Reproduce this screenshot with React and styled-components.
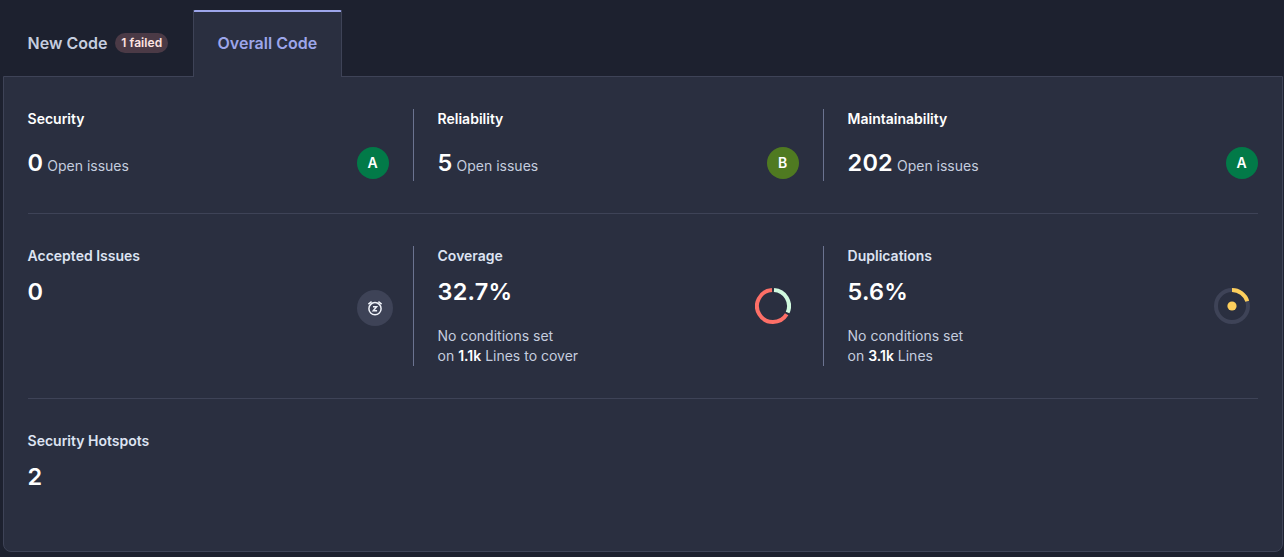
import React from 'react';
import styled, { createGlobalStyle } from 'styled-components';

const Global = createGlobalStyle`
  *, *::before, *::after { box-sizing: border-box; }
  html, body { margin: 0; height: 100%; background: #1d212f; }
  body {
    font-family: Inter, "Liberation Sans", sans-serif;
    font-size: 14px;
    line-height: 20px;
    color: #c5cddf;
    overflow: hidden;
  }
`;

const Page = styled.div`
  width: 1280px;
  height: 557px;
  margin-left: 2.55px;
  padding-top: 10px;
`;

const Tabs = styled.div`
  display: flex;
  height: 67px;
`;

const Tab = styled.button`
  display: flex;
  align-items: center;
  gap: 8px;
  width: ${(p) => (p.$active ? 149 : 190)}px;
  padding: 0 24px 3px;
  border: 1px solid ${(p) => (p.$active ? '#3e4357' : 'transparent')};
  border-bottom: 0;
  border-top: 2px solid ${(p) => (p.$active ? '#9da6eb' : 'transparent')};
  border-radius: 2px 2px 0 0;
  background: ${(p) => (p.$active ? '#2a2f40' : 'transparent')};
  color: ${(p) => (p.$active ? '#9da6eb' : '#c5cddf')};
  font: 600 16px/24px Inter, sans-serif;
  white-space: nowrap;
  z-index: 1;
`;

const FailedBadge = styled.span`
  height: 20px;
  padding: 0 6px;
  border-radius: 10px;
  background: #4b3a46;
  color: #fee4e2;
  font-size: 12px;
  line-height: 20px;
  letter-spacing: 0.08px;
`;

const Panel = styled.main`
  height: 476px;
  margin-top: -1px;
  padding: 0 24px;
  background: #2a2f40;
  border: 1px solid #3e4357;
  border-radius: 0 0 8px 8px;
`;

const Row = styled.section`
  display: flex;
  gap: 24px;
  padding: 32px 0;
  border-bottom: 1px solid ${(p) => (p.$last ? 'transparent' : '#3e4357')};
`;

const Cell = styled.div`
  flex: none;
  width: ${(p) => (p.$last ? 410 : 386)}px;
  height: ${(p) => p.$height}px;
  padding-right: ${(p) => (p.$last ? 0 : 24)}px;
  border-right: ${(p) => (p.$last ? '0' : '1px solid #6b7390')};
`;

const Title = styled.h3`
  margin: 0;
  font-size: 14px;
  line-height: 20px;
  font-weight: 600;
  color: ${(p) => (p.$bright ? '#fff' : '#dde3f2')};
`;

const RatingLine = styled.div`
  display: flex;
  justify-content: space-between;
  align-items: center;
  height: 32px;
  margin-top: 18px;
`;

const Value = styled.span`
  font-size: 23.5px;
  letter-spacing: 0.2px;
  line-height: 32px;
  font-weight: 600;
  color: #fff;
`;

const Label = styled.span`
  margin-left: 4px;
`;

const Rating = styled.span`
  width: 32px;
  height: 32px;
  border-radius: 50%;
  background: ${(p) => (p.$grade === 'A' ? '#027a48' : '#4f7a21')};
  color: #fff;
  font-weight: 600;
  line-height: 32px;
  text-align: center;
`;

const MetricBody = styled.div`
  display: flex;
  justify-content: space-between;
  margin-top: 10px;
`;

const Figure = styled.div`
  height: 36px;
  margin-top: ${(p) => p.$top}px;
  margin-right: ${(p) => p.$right}px;
  svg { display: block; }
`;

const Conditions = styled.div`
  margin-top: 18px;
  b { color: #fff; font-weight: 600; }
`;

const RING = 2 * Math.PI * 16;

function arc(from, to) {
  const point = (t) => {
    const a = t * 2 * Math.PI;
    return `${(18 + 16 * Math.sin(a)).toFixed(3)} ${(18 - 16 * Math.cos(a)).toFixed(3)}`;
  };
  return `M${point(from)}A16 16 0 ${to - from > 0.5 ? 1 : 0} 1 ${point(to)}`;
}

const CoverageRing = () => (
  <svg width="36" height="36" viewBox="0 0 36 36" fill="none" strokeWidth="4">
    <path d={arc(0.01, 0.317)} stroke="#d1fadf" />
    <path d={arc(0.337, 0.99)} stroke="#fd6f67" />
  </svg>
);

const DuplicationRing = () => (
  <svg width="36" height="36" viewBox="0 0 36 36" fill="none" strokeWidth="4">
    <circle cx="18" cy="18" r="16" stroke="#3e4357" />
    <circle cx="18" cy="18" r="16" stroke="#fdcf5c" strokeDasharray={`${RING * 0.2} ${RING}`} transform="rotate(-90 18 18)" />
    <circle cx="18" cy="18" r="4.6" fill="#fdcf5c" />
  </svg>
);

const SnoozeIcon = () => (
  <svg width="36" height="36" viewBox="0 0 36 36" fill="none" stroke="#eff2f9" strokeWidth="1.5">
    <circle cx="18" cy="18" r="18" fill="#3e4357" stroke="none" />
    <circle cx="18" cy="18.7" r="6.1" />
    <path d="M11.4 14.2l3.2-2.6M24.6 14.2l-3.2-2.6" />
    <path d="M16 16.7h3.6l-3.3 4h3.8" strokeWidth="1.5" />
  </svg>
);

const RatingCell = ({ title, count, grade, last }) => (
  <Cell $height={72} $last={last}>
    <Title $bright>{title}</Title>
    <RatingLine>
      <div>
        <Value>{count}</Value>
        <Label>Open issues</Label>
      </div>
      <Rating $grade={grade}>{grade}</Rating>
    </RatingLine>
  </Cell>
);

const MetricCell = ({ title, value, lines, linesLabel, figure, top, right, last, height = 120 }) => (
  <Cell $height={height} $last={last}>
    <Title>{title}</Title>
    <MetricBody>
      <div>
        <Value as="div">{value}</Value>
        {lines && (
          <Conditions>
            No conditions set
            <br />
            on <b>{lines}</b> {linesLabel}
          </Conditions>
        )}
      </div>
      {figure && <Figure $top={top} $right={right}>{figure}</Figure>}
    </MetricBody>
  </Cell>
);

export default function App() {
  return (
    <>
      <Global />
      <Page>
        <Tabs>
          <Tab>
            New Code <FailedBadge>1 failed</FailedBadge>
          </Tab>
          <Tab $active>Overall Code</Tab>
        </Tabs>
        <Panel>
          <Row>
            <RatingCell title="Security" count="0" grade="A" />
            <RatingCell title="Reliability" count="5" grade="B" />
            <RatingCell title="Maintainability" count="202" grade="A" last />
          </Row>
          <Row>
            <MetricCell title="Accepted Issues" value="0" figure={<SnoozeIcon />} top={14} right={-4} />
            <MetricCell title="Coverage" value="32.7%" lines="1.1k" linesLabel="Lines to cover" figure={<CoverageRing />} top={12} right={8} />
            <MetricCell title="Duplications" value="5.6%" lines="3.1k" linesLabel="Lines" figure={<DuplicationRing />} top={12} right={8} last />
          </Row>
          <Row $last>
            <MetricCell title="Security Hotspots" value="2" height={88} last />
          </Row>
        </Panel>
      </Page>
    </>
  );
}
